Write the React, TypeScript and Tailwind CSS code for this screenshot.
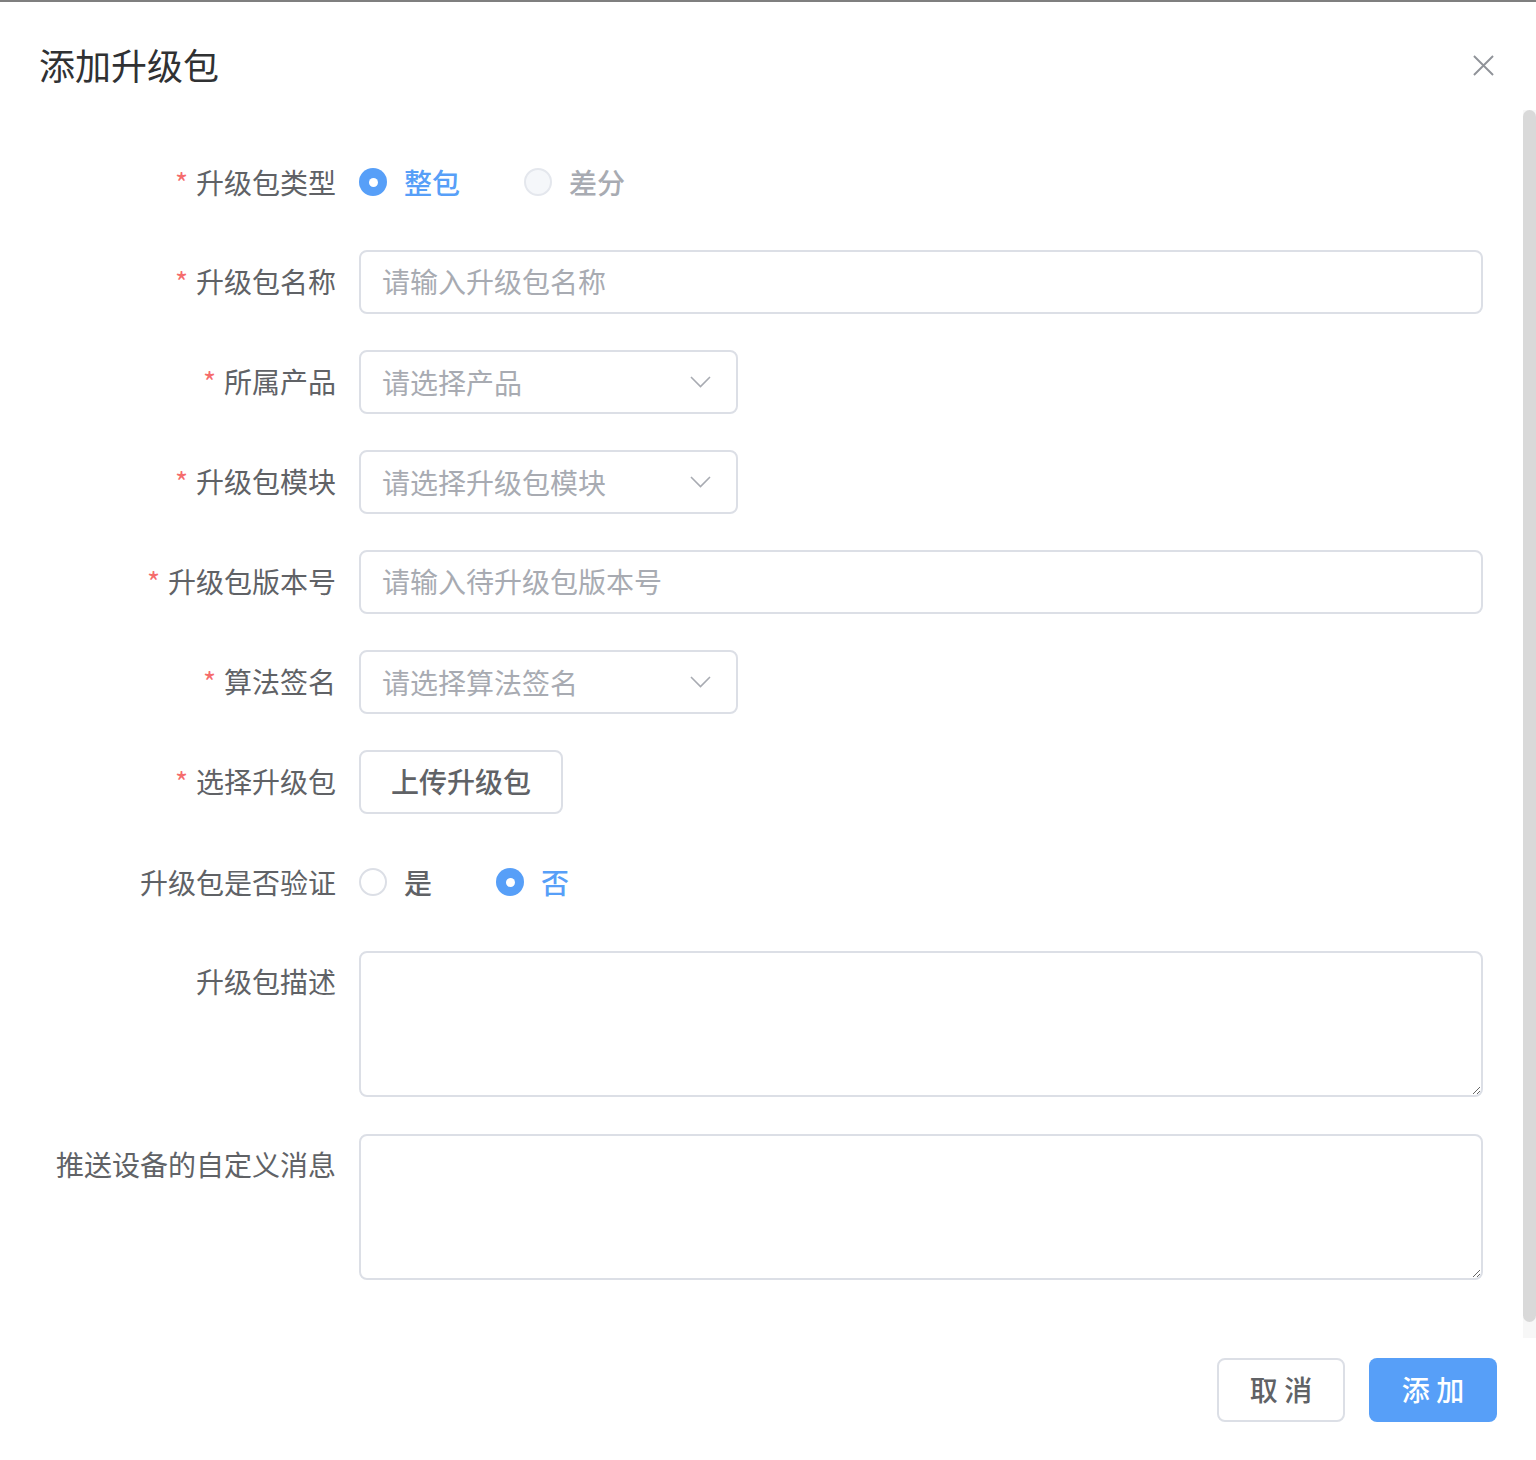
import React, { useState } from "react";

const labelCls = "w-[319px] shrink-0 pr-[23px] text-right text-[28px] leading-[62px] text-[#606266]";

const Label = ({ text, required }: { text: string; required?: boolean }) => (
  <div className={labelCls}>
    {required && <span className="mr-[8px] text-[#f56c6c]">*</span>}
    {text}
  </div>
);

const Chevron = () => (
  <svg width="21" height="12" viewBox="0 0 21 12" fill="none">
    <polyline points="1,1 10.5,10.5 20,1" stroke="#a8abb2" strokeWidth="1.6" />
  </svg>
);

const SelectBox = ({ placeholder }: { placeholder: string }) => (
  <div className="flex h-[64px] w-[379px] items-center justify-between rounded-[8px] border-2 border-[#dcdfe6] pl-[21px] pr-[25px]">
    <span className="text-[28px] leading-[58px] text-[#a8abb2]">{placeholder}</span>
    <Chevron />
  </div>
);

const Radio = ({
  label,
  checked,
  disabled,
  onClick,
}: {
  label: string;
  checked?: boolean;
  disabled?: boolean;
  onClick?: () => void;
}) => (
  <label className="mr-[64px] flex cursor-pointer items-center" onClick={onClick}>
    {checked ? (
      <span className="flex h-[28px] w-[28px] items-center justify-center rounded-full bg-[#579ff8]">
        <span className="h-[9px] w-[9px] rounded-full bg-white" />
      </span>
    ) : (
      <span
        className={
          disabled
            ? "h-[28px] w-[28px] rounded-full border-2 border-[#e4e7ed] bg-[#f5f7fa]"
            : "h-[28px] w-[28px] rounded-full border-2 border-[#dcdfe6] bg-white"
        }
      />
    )}
    <span
      className={`ml-[17px] text-[28px] font-medium leading-[58px] ${
        checked ? "text-[#579ff8]" : disabled ? "text-[#a8abb2]" : "text-[#606266]"
      }`}
    >
      {label}
    </span>
  </label>
);

export default function App() {
  const [verify, setVerify] = useState(false);

  return (
    <div
      className="flex h-[1460px] w-full flex-col overflow-hidden border-t-2 border-[#7f7f7f] bg-white"
      style={{ fontFamily: '"Noto Sans CJK SC", "Noto Sans", sans-serif' }}
    >
      {/* header */}
      <div className="flex h-[108px] shrink-0 items-start justify-between pl-[39px] pr-[42px] pt-[38px]">
        <h1 className="text-[36px] leading-[48px] text-[#303133]">添加升级包</h1>
        <button className="mt-[15px]">
          <svg width="21" height="21" viewBox="0 0 22 22">
            <path d="M1 1L21 21M21 1L1 21" stroke="#909399" strokeWidth="2" />
          </svg>
        </button>
      </div>

      {/* body */}
      <div className="flex h-[1228px] shrink-0">
        <div className="flex-1 pl-[40px] pr-[40px] pt-[40px]">
          <div className="mb-[36px] flex h-[64px] items-center">
            <Label text="升级包类型" required />
            <Radio label="整包" checked />
            <Radio label="差分" disabled />
          </div>

          <div className="mb-[36px] flex">
            <Label text="升级包名称" required />
            <input
              placeholder="请输入升级包名称"
              className="h-[64px] flex-1 rounded-[8px] border-2 border-[#dcdfe6] px-[21px] pb-[2px] text-[28px] text-[#606266] outline-none placeholder:text-[#a8abb2]"
            />
          </div>

          <div className="mb-[36px] flex">
            <Label text="所属产品" required />
            <SelectBox placeholder="请选择产品" />
          </div>

          <div className="mb-[36px] flex">
            <Label text="升级包模块" required />
            <SelectBox placeholder="请选择升级包模块" />
          </div>

          <div className="mb-[36px] flex">
            <Label text="升级包版本号" required />
            <input
              placeholder="请输入待升级包版本号"
              className="h-[64px] flex-1 rounded-[8px] border-2 border-[#dcdfe6] px-[21px] pb-[2px] text-[28px] text-[#606266] outline-none placeholder:text-[#a8abb2]"
            />
          </div>

          <div className="mb-[36px] flex">
            <Label text="算法签名" required />
            <SelectBox placeholder="请选择算法签名" />
          </div>

          <div className="mb-[36px] flex">
            <Label text="选择升级包" required />
            <button className="h-[64px] w-[204px] rounded-[8px] border-2 border-[#dcdfe6] bg-white pb-[2px] text-[28px] font-medium text-[#606266]">
              上传升级包
            </button>
          </div>

          <div className="mb-[36px] flex h-[64px] items-center">
            <Label text="升级包是否验证" />
            <Radio label="是" checked={verify} onClick={() => setVerify(true)} />
            <Radio label="否" checked={!verify} onClick={() => setVerify(false)} />
          </div>

          <div className="mb-[36px] flex">
            <Label text="升级包描述" />
            <textarea className="mt-[1px] h-[146px] flex-1 rounded-[8px] border-2 border-[#dcdfe6] px-[22px] py-[10px] text-[28px] text-[#606266] outline-none" />
          </div>

          <div className="flex">
            <Label text="推送设备的自定义消息" />
            <textarea className="mt-[1px] h-[146px] flex-1 rounded-[8px] border-2 border-[#dcdfe6] px-[22px] py-[10px] text-[28px] text-[#606266] outline-none" />
          </div>
        </div>

        {/* scrollbar */}
        <div className="flex w-[13px] shrink-0 flex-col bg-[#f7f7f7]">
          <div className="h-[1212px] rounded-full bg-[#d9d9d9]" />
        </div>
      </div>

      {/* footer */}
      <div className="flex justify-end gap-[24px] pr-[39px] pt-[20px]">
        <button className="h-[64px] w-[128px] rounded-[8px] border-2 border-[#dcdfe6] bg-white pb-[2px] text-[28px] font-medium text-[#606266]">
          取 消
        </button>
        <button className="h-[64px] w-[128px] rounded-[8px] bg-[#579ff8] pb-[2px] text-[28px] font-medium text-white">
          添 加
        </button>
      </div>
    </div>
  );
}
